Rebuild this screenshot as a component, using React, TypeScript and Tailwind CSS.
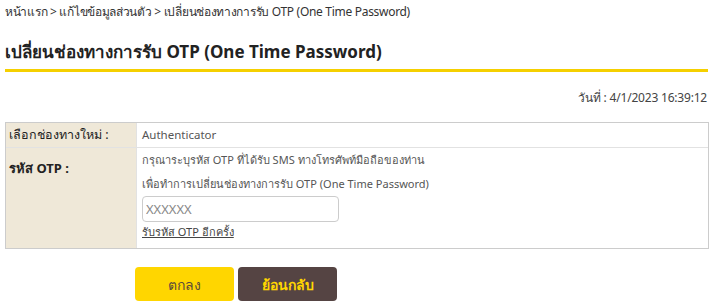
import React from "react";

export default function App() {
  const font = { fontFamily: '"Noto Sans", "Liberation Sans", sans-serif' };
  return (
    <div className="w-[713px] h-[303px] bg-white overflow-hidden px-[5px]" style={font}>
      <div className="pt-[3px] text-[12px] tracking-[-0.3px] text-[#333] leading-[18px]">
        หน้าแรก &gt; แก้ไขข้อมูลส่วนตัว &gt; เปลี่ยนช่องทางการรับ OTP (One Time Password)
      </div>
      <h1 className="mt-[19px] text-[17px] font-bold text-[#222] leading-[24px]">
        เปลี่ยนช่องทางการรับ OTP (One Time Password)
      </h1>
      <div className="mt-[5px] h-[3px] bg-[#f5d000]" />
      <div className="mt-[18px] text-right text-[12px] tracking-[-0.2px] text-[#444] leading-[16px] pr-[1px]">
        วันที่ : 4/1/2023 16:39:12
      </div>
      <div className="mt-[16px] border border-[#cccccc] w-[704px]">
        <div className="flex border-b border-[#e2e2e2]">
          <div className="w-[131px] bg-[#efe8d8] border-r border-[#e2e2e2] px-[3px] h-[24px] flex items-center text-[12.5px] text-[#222]">
            เลือกช่องทางใหม่ :
          </div>
          <div className="flex-1 px-[5px] flex items-center text-[11.5px] text-[#555]">Authenticator</div>
        </div>
        <div className="flex">
          <div className="w-[131px] bg-[#efe8d8] border-r border-[#e2e2e2] px-[3px] pt-[11px] text-[13px] font-bold text-[#222]">
            รหัส OTP :
          </div>
          <div className="flex-1 px-[5px] pt-[0px] pb-[6px] text-[11px] text-[#555]">
            <div className="h-[24px] flex items-center">กรุณาระบุรหัส OTP ที่ได้รับ SMS ทางโทรศัพท์มือถือของท่าน</div>
            <div className="h-[24px] flex items-center">เพื่อทำการเปลี่ยนช่องทางการรับ OTP (One Time Password)</div>
            <input
              className="mt-[0px] block w-[197px] h-[26px] border border-[#cccccc] rounded-[4px] px-[3px] text-[13px] text-[#555] placeholder:text-[#888] outline-none"
              placeholder="XXXXXX"
              style={font}
            />
            <a className="block underline text-[11px] text-[#444] leading-[20px]" href="#">
              รับรหัส OTP อีกครั้ง
            </a>
          </div>
        </div>
      </div>
      <div className="mt-[18px] flex gap-[4px] pl-[130px]">
        <button className="w-[99px] h-[34px] rounded-[4px] bg-[#ffd600] text-[#5a4a3a] text-[14px]">ตกลง</button>
        <button className="w-[99px] h-[34px] rounded-[4px] bg-[#554443] text-[#ffd600] text-[14px] font-bold">ย้อนกลับ</button>
      </div>
    </div>
  );
}
